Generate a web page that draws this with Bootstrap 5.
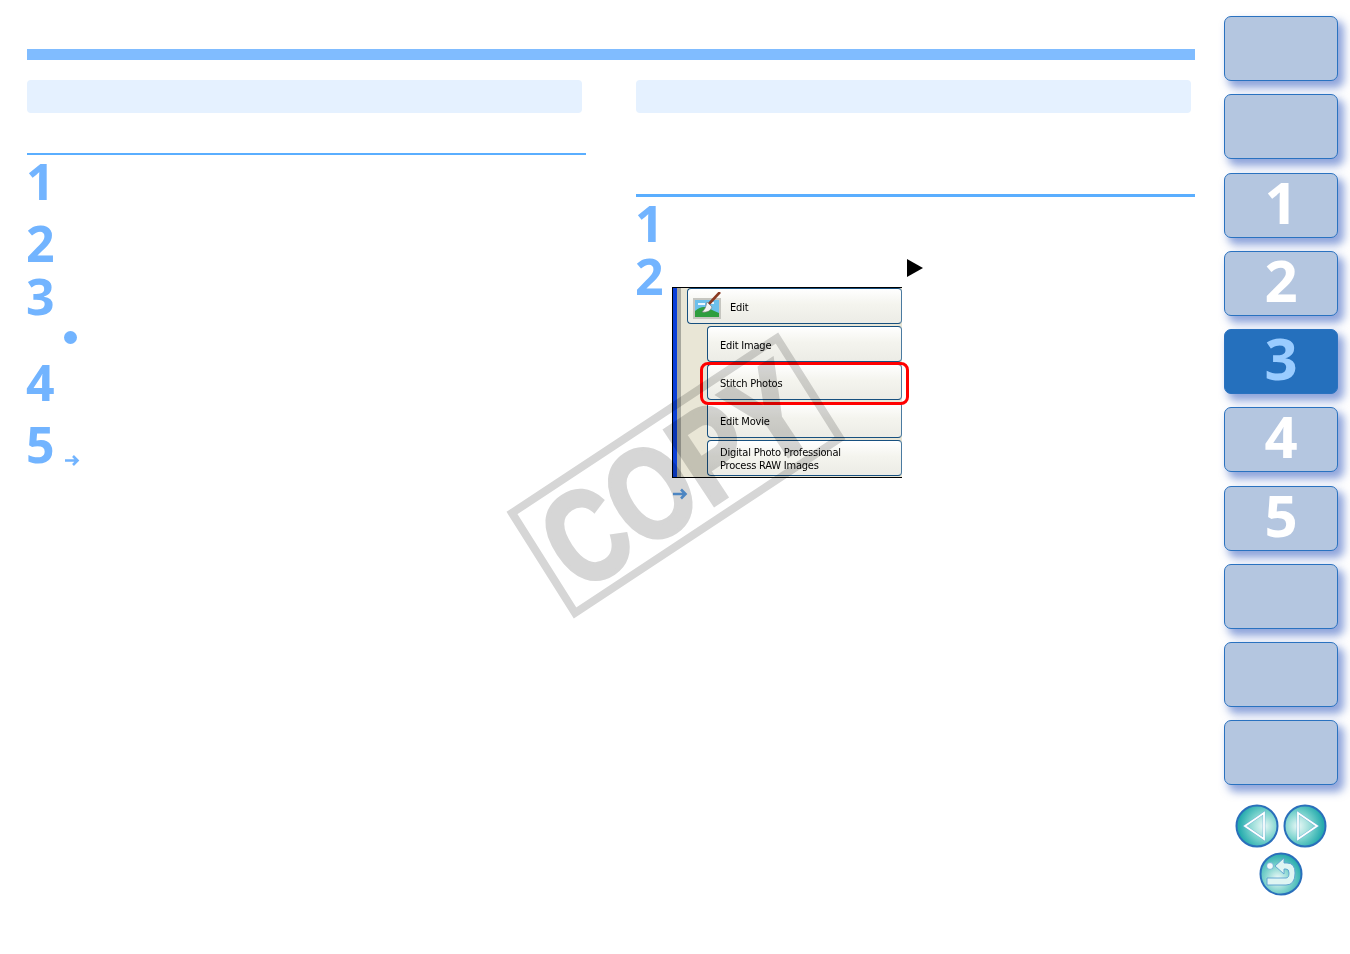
<!DOCTYPE html>
<html lang="en">
<head>
<meta charset="utf-8">
<title>Stitch Photos</title>
<link href="https://cdn.jsdelivr.net/npm/bootstrap@5.3.0/dist/css/bootstrap.min.css" rel="stylesheet">
<style>
html,body{background:#fff;height:954px;overflow:hidden}
.pg{width:1350px;height:954px}
.mainarea{width:1168px;margin-left:27px;padding-top:49px}
.topbar{height:11px;background:#80bcff;margin-bottom:20px}
.colsx{gap:50px}
.colx{width:559px}
.headbar{width:555px;height:33px;background:#e5f1ff;border-radius:4px}
.rule{background:#5aaeff}
.rule-l{height:2px;margin-top:40px;margin-bottom:8px}
.rule-r{height:3px;margin-top:81px;margin-bottom:8px}
.num{font-family:"Noto Sans",sans-serif;font-weight:700;font-size:50px;line-height:37px;height:37px;color:#72b4ff;width:36px;margin-left:-1px}
.h62{height:62px}.h53{height:53px}.h51{height:51px}.h33{height:33px}
.bullet{width:13px;height:13px;border-radius:50%;background:#72b4ff;margin-left:37px;margin-top:2px}
.arrl{width:16px;height:13px;margin-top:28px;margin-left:2px}
.arrr{width:16px;height:12px;margin-left:36px;margin-top:10px}
.numrow2{height:29px}
.tri{width:0;height:0;border-left:16px solid #000;border-top:9px solid transparent;border-bottom:9px solid transparent;margin-left:236px;margin-top:1px}
.shot{width:230px;height:191px;margin-left:36px;border-top:1px solid #000;border-bottom:1px solid #000;border-left:1px solid #000;background:linear-gradient(90deg,#0a3fd8 0,#0a3fd8 4px,#a8a89e 4px,#a8a89e 8px,#e9e6d6 8px);font-family:"DejaVu Sans",sans-serif;font-stretch:condensed;font-size:11px;letter-spacing:-.2px;color:#000;line-height:13px;gap:2px}
.uibtn{height:36px;flex:none;margin-left:34px;border:1px solid #17507f;border-right-color:#4a7aa0;border-radius:4px;background:linear-gradient(180deg,#fff 0,#f4f4ee 45%,#ecece6 100%);padding-left:12px;padding-top:2px}
.uibtn-top{margin-left:14px;padding-left:5px;padding-top:0;gap:9px}
.uibtn-top span{padding-top:2px}
.shoticon{width:28px;height:28px}
.hilite{left:700px;top:362px;width:209px;height:43px;border:3px solid #f00;border-radius:8px}
.wmark{left:0;top:0;width:1350px;height:954px;mix-blend-mode:multiply;pointer-events:none}
.rail{width:114px;margin-left:29px;padding-top:16px;gap:13.25px}
.tabx{height:65px;width:114px;border:1.5px solid #2a72c0;border-radius:7px;background:#b4c6e0;box-shadow:5px 6px 8px 1px rgba(50,90,190,.55);color:#fff;font-family:"Noto Sans",sans-serif;font-weight:700;font-size:58px;line-height:55px;text-decoration:none}
.tabx-on{background:#2570bd;color:#9accff}
.navgrp{width:114px;margin-top:5px}
.navtop{gap:4px}
.circ{width:44px;height:44px;display:block}
.circ-b{margin-top:4px}
</style>
</head>
<body class="m-0">
<div class="pg d-flex position-relative">
  <main class="mainarea flex-shrink-0">
    <div class="topbar"></div>
    <div class="d-flex colsx">
      <section class="colx">
        <div class="headbar"></div>
        <div class="rule rule-l"></div>
        <div class="h62"><div class="num">1</div></div>
        <div class="h53"><div class="num">2</div></div>
        <div class="h51"><div class="num">3</div></div>
        <div class="h33"><div class="bullet"></div></div>
        <div class="h62"><div class="num">4</div></div>
        <div class="d-flex"><div class="num">5</div>
          <svg class="arrl" viewBox="0 0 16 13"><path d="M1 6.5H13M9 2l4.5 4.5L9 11" fill="none" stroke="#72b4ff" stroke-width="2.6"/></svg>
        </div>
      </section>
      <section class="colx">
        <div class="headbar"></div>
        <div class="rule rule-r"></div>
        <div class="h53"><div class="num">1</div></div>
        <div class="d-flex numrow2"><div class="num">2</div><div class="tri"></div></div>
        <div class="shot d-flex flex-column">
          <div class="uibtn uibtn-top d-flex align-items-center">
            <svg class="shoticon" viewBox="0 0 28 28">
              <rect x="0" y="6" width="28" height="21" fill="#c6c6c0"/>
              <rect x="2" y="8" width="24" height="17" fill="#6cc0ec"/>
              <path d="M2 25V19Q9 13 15 16T26 21V25Z" fill="#2e9e3f"/>
              <path d="M5 11h7v2H5zM16 10h5v2h-5z" fill="#eaf6ff"/>
              <path d="M27 0 15 13" stroke="#8a3a22" stroke-width="2.6" fill="none"/>
              <path d="M14 10 19 15Q17 21 9 20 13 17 14 10Z" fill="#f4f4f4" stroke="#777" stroke-width=".6"/>
            </svg>
            <span>Edit</span>
          </div>
          <div class="uibtn d-flex align-items-center"><span>Edit Image</span></div>
          <div class="uibtn d-flex align-items-center"><span>Stitch Photos</span></div>
          <div class="uibtn d-flex align-items-center"><span>Edit Movie</span></div>
          <div class="uibtn d-flex align-items-center"><span>Digital Photo Professional<br>Process RAW Images</span></div>
        </div>
        <svg class="arrr d-block" viewBox="0 0 16 12"><path d="M1 6H13M9 1.5 13.5 6 9 10.5" fill="none" stroke="#5a9fe8" stroke-width="2.6"/></svg>
      </section>
    </div>
  </main>
  <nav class="rail d-flex flex-column flex-shrink-0">
    <a class="tabx d-flex justify-content-center" href="#"></a>
    <a class="tabx d-flex justify-content-center" href="#"></a>
    <a class="tabx d-flex justify-content-center" href="#">1</a>
    <a class="tabx d-flex justify-content-center" href="#">2</a>
    <a class="tabx tabx-on d-flex justify-content-center" href="#">3</a>
    <a class="tabx d-flex justify-content-center" href="#">4</a>
    <a class="tabx d-flex justify-content-center" href="#">5</a>
    <a class="tabx d-flex justify-content-center" href="#"></a>
    <a class="tabx d-flex justify-content-center" href="#"></a>
    <a class="tabx d-flex justify-content-center" href="#"></a>
    <div class="navgrp d-flex flex-column align-items-center">
      <div class="d-flex navtop">
        <svg class="circ" viewBox="0 0 44 44"><defs><radialGradient id="g1" cx=".68" cy=".5" r=".62"><stop offset="0" stop-color="#e8f8f6"/><stop offset=".55" stop-color="#78d2cc"/><stop offset="1" stop-color="#26abae"/></radialGradient></defs><circle cx="22" cy="22" r="20.5" fill="url(#g1)" stroke="#2a6fbb" stroke-width="2"/><path d="M29 9V35L10 22Z" fill="#fff" fill-opacity=".18" stroke="#6fb0d8" stroke-width="2.6"/><path d="M29 9V35L10 22Z" fill="none" stroke="#fff" stroke-width="1.8"/></svg>
        <svg class="circ" viewBox="0 0 44 44"><defs><radialGradient id="g2" cx=".32" cy=".5" r=".62"><stop offset="0" stop-color="#e8f8f6"/><stop offset=".55" stop-color="#78d2cc"/><stop offset="1" stop-color="#26abae"/></radialGradient></defs><circle cx="22" cy="22" r="20.5" fill="url(#g2)" stroke="#2a6fbb" stroke-width="2"/><path d="M15 9V35L34 22Z" fill="#fff" fill-opacity=".18" stroke="#6fb0d8" stroke-width="2.6"/><path d="M15 9V35L34 22Z" fill="none" stroke="#fff" stroke-width="1.8"/></svg>
      </div>
      <svg class="circ circ-b" viewBox="0 0 44 44"><defs><radialGradient id="g3" cx=".42" cy=".62" r=".62"><stop offset="0" stop-color="#f2fbfa"/><stop offset=".5" stop-color="#82d4ce"/><stop offset="1" stop-color="#26abae"/></radialGradient></defs><circle cx="22" cy="22" r="20.5" fill="url(#g3)" stroke="#2a6fbb" stroke-width="2"/><circle cx="11" cy="14" r="3.4" fill="#f4fbfb" stroke="#5aa0d0" stroke-width=".7"/><path d="M16 14 25 6V11H28Q36 11 36 21 36 33 27 33H8V26H27Q30 26 30 21 30 17 27 17H25V22Z" fill="#dff5f3" stroke="#5aa0d0" stroke-width=".9"/></svg>
    </div>
  </nav>
  <div class="hilite position-absolute"></div>
  <svg class="wmark position-absolute" viewBox="0 0 1350 954">
    <polygon points="512,513 575,613 840,438 777,338" fill="none" stroke="#d6d6d6" stroke-width="8" stroke-linejoin="miter"/>
    <text x="0" y="0" transform="translate(676 475) rotate(-33.5)" text-anchor="middle" dy="46" font-family="Liberation Sans" font-weight="700" font-size="130" fill="#d6d6d6" stroke="#d6d6d6" stroke-width="4" textLength="292" lengthAdjust="spacingAndGlyphs">COPY</text>
  </svg>
</div>
<script src="https://cdn.jsdelivr.net/npm/bootstrap@5.3.0/dist/js/bootstrap.bundle.min.js"></script>
</body>
</html>
